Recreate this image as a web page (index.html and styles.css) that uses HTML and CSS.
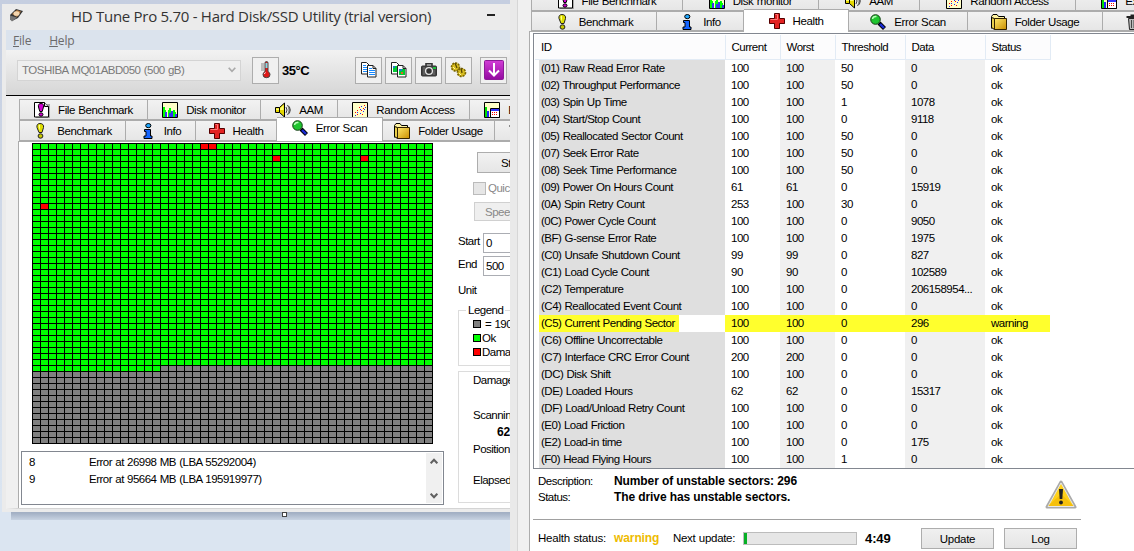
FILE: index.html
```html
<!DOCTYPE html>
<html lang="en">

<head>
    <meta charset="UTF-8">
    <meta name="viewport" content="width=device-width, initial-scale=1.0">
    <title>HD Tune Pro 5.70 - Hard Disk/SSD Utility</title>
    <link rel="stylesheet" href="styles.css">
</head>

<body>
    <!-- Shared icons -->
    <svg class="defs" width="0" height="0">
        <defs>
            <linearGradient id="gold" x1="0" y1="0" x2="1" y2="1">
                <stop offset="0" stop-color="#ffe96b" />
                <stop offset="1" stop-color="#c98d00" />
            </linearGradient>
            <linearGradient id="purple" x1="0" y1="0" x2="0" y2="1">
                <stop offset="0" stop-color="#d23ed6" />
                <stop offset="1" stop-color="#930aa0" />
            </linearGradient>
            <symbol id="file-benchmark" viewBox="0 0 16 16">
                <path d="M2 2h14v14H2z" fill="#aaa" />
                <path d="M.5.5h10l4 4v10.500h-14z" fill="#fff" stroke="#000" />
                <path d="M10.500.500v4h4" fill="#ddd" stroke="#000" />
                <path d="M7 1.500c2.200 0 3 1.500 2.500 3.500L8.200 9.500H5.800L4.500 5C4 3 4.800 1.500 7 1.500z" fill="#d000d0" stroke="#000" />
                <ellipse cx="7" cy="12.500" rx="2" ry="1.700" fill="#d000d0" stroke="#000" />
            </symbol>
            <symbol id="disk-monitor" viewBox="0 0 16 16">
                <path d="M.5.5h15v15H.5z" fill="#ffffc8" stroke="#000" />
                <path d="M1 15V5h2v3h1v7zM6 15V8h1V6h2v9zM11 15V8h2v2h1v5z" fill="#0f0" />
                <path d="M3 10h2v5H3zM7 11h2v4H7zM9 9h2v6H9zM13 12h2v3h-2z" fill="#3434f0" />
            </symbol>
            <symbol id="speaker" viewBox="0 0 16 16">
                <path d="M.5 5.500h4L9.500 1v14L4.500 10.500h-4z" fill="#e6d800" stroke="#000" />
                <path d="M1 6.500h4L8.500 3v5H1z" fill="#ffff70" />
                <path d="M4.500 5.500v5" stroke="#000" />
                <path d="M11 5q2 3 0 6M12.500 3q3.500 5 0 10M14.300 4.500q2 3.500 0 7" fill="none" stroke="#444" />
            </symbol>
            <symbol id="random" viewBox="0 0 16 16">
                <path d="M.5.500h15v15H.5z" fill="#ffffc8" stroke="#000" />
                <path d="M3 10h1v1H3zM5 8h1v1H5zM7 5h1v1H7zM9 8h1v1H9zM11 6h1v1h-1zM12 3h1v1h-1zM10 12h1v1h-1zM5 12h1v1H5z" fill="#f00" />
                <path d="M3 13h1v1H3zM5 10h1v1H5zM8 7h1v1H8zM9 4h1v1H9zM11 9h1v1h-1zM12 7h1v1h-1zM8 11h1v1H8zM13 5h1v1h-1z" fill="#22f" />
            </symbol>
            <symbol id="extra" viewBox="0 0 16 16">
                <path d="M.5.500h15v15H.5z" fill="#ffffc8" stroke="#000" />
                <path d="M1 5h2v10H1z" fill="#0d0" />
                <path d="M3 9h2v6H3z" fill="#22f" />
                <path d="M6.500 6.500h9v9h-9z" fill="#fff" stroke="#000" />
                <path d="M7 7h8v2H7z" fill="#33f" />
                <path d="M8 10h1v1H8zM10 10h1v1h-1zM12 10h1v1h-1zM8 12h1v1H8zM10 12h1v1h-1zM12 12h1v1h-1z" fill="#f00" />
            </symbol>
            <symbol id="benchmark" viewBox="0 0 16 16">
                <path d="M7 .5c2.700 0 4 1.700 3.500 4L9 9.500H6L4 4.500C3.500 2.200 4.500.500 7 .500z" fill="#dede00" stroke="#222" />
                <path d="M5.500 3q.5-1.500 1.500-1.500V8z" fill="#ffff90" />
                <ellipse cx="7.500" cy="13" rx="2.400" ry="2.200" fill="#c8c800" stroke="#222" />
            </symbol>
            <symbol id="info" viewBox="0 0 16 16">
                <ellipse cx="8.300" cy="2.600" rx="2.600" ry="2.100" fill="#20a8ff" stroke="#000" />
                <path d="M4.500 6.500h6v6.500h1.500v2.500h-8V13H6V8.500H4.500z" fill="#1464ff" stroke="#000" />
            </symbol>
            <symbol id="health" viewBox="0 0 16 16">
                <path d="M6 2h5v4h5v5h-5v5H6v-5H1V6h5z" fill="#888" />
                <path d="M5.500.500h5v5h5v5h-5v5h-5v-5h-5v-5h5z" fill="#e32222" stroke="#500" />
                <path d="M6.500 1.500h2v5h-7" fill="none" stroke="#ff7777" />
            </symbol>
            <symbol id="scan" viewBox="0 0 16 16">
                <path d="M9 9l5.500 5.500" stroke="#000" stroke-width="4.200" />
                <path d="M10 10l4 4" stroke="#1a2cd8" stroke-width="2.400" />
                <circle cx="5.500" cy="5.500" r="4.800" fill="#1fc52f" stroke="#143c14" />
                <path d="M2.500 5q.5-3 4-2.500" fill="none" stroke="#b8ffb8" stroke-width="1.500" />
            </symbol>
            <symbol id="folder" viewBox="0 0 16 16">
                <path d="M.5 14.500V2.500l1.500-2h4l1.500 2h6v2" fill="#fff3a0" stroke="#000" />
                <path d="M.5 3.500l3 1v11l-3-2z" fill="#e9cf4b" stroke="#000" />
                <path d="M3.500 4.500h12v11h-12z" fill="url(#gold)" stroke="#332200" />
            </symbol>
            <symbol id="trash" viewBox="0 0 16 16">
                <path d="M.5 3h14M5.500 3V1.500h4V3" fill="none" stroke="#222" stroke-width="2" />
                <path d="M2.500 4.500h11l-1 11h-9z" fill="#bbb" stroke="#222" />
                <path d="M5.500 6v8M8 6v8M10.500 6v8" stroke="#444" />
            </symbol>
        </defs>
    </svg>

    <div class="shadow"></div>

    <div class="window main-window">
        <div class="title-bar">
            <svg class="app-icon" width="15" height="14" viewBox="0 0 15 14">
                <path d="M1 7L7 1l7 2-5 7-6 3z" fill="#333" />
                <path d="M3 6l5-4 4 1.500L8 9z" fill="#b07840" />
                <ellipse cx="7.500" cy="5.500" rx="3" ry="2.300" fill="#f5d7b0" />
                <path d="M1 7.500L8 9.500l-5 4-2-2z" fill="#777" />
            </svg>
            <span class="title">HD Tune Pro 5.70 - Hard Disk/SSD Utility (trial version)</span>
            <span class="minimize"></span>
        </div>
        <div class="menu"><span><u>F</u>ile</span><span><u>H</u>elp</span></div>
        <div class="toolbar">
            <div class="drive">
                <span>TOSHIBA MQ01ABD050 (500 gB)</span>
                <svg width="8" height="6" viewBox="0 0 8 6"><path d="M.7.700L4 4.300 7.300.700" fill="none" stroke="#aaa" stroke-width="1.700" /></svg>
            </div>
            <div class="tool temp">
                <svg width="12" height="18" viewBox="0 0 12 18">
                    <path d="M5 2q0-1.500 1.500-1.500T8 2v8.500q2 1 2 3.200 0 3-3.500 3T3 13.700q0-2.200 2-3.200z" fill="#e01818" stroke="#444" />
                    <path d="M5.500 2h2v5h-2z" fill="#7fdce8" />
                    <path d="M1 3h3M1 5h3M1 7h3M1 9h3" stroke="#888" />
                    <path d="M4.500 13q0-1 1-1.500" stroke="#fff" fill="none" />
                </svg>
            </div>
            <span class="degrees">35°C</span>
            <div class="tool">
                <svg width="18" height="16" viewBox="0 0 18 16">
                    <path d="M1.500.500h5l3 3v8.500h-8z" fill="#fff" stroke="#222" />
                    <path d="M3 3.500h3M3 5.500h5M3 7.500h5M3 9.500h5" stroke="#1689ff" />
                    <path d="M7.500 3.500h5.500l3 3v8.500H7.500z" fill="#fff" stroke="#222" />
                    <path d="M13 3.500v3h3" fill="none" stroke="#222" />
                    <path d="M9 6.500h3M9 8.500h6M9 10.500h6M9 12.500h6" stroke="#1689ff" />
                </svg>
            </div>
            <div class="tool">
                <svg width="18" height="16" viewBox="0 0 18 16">
                    <path d="M1.500.500h5l3 3v8.500h-8z" fill="#fff" stroke="#222" />
                    <path d="M3 4h5v6H3z" fill="#0c3" />
                    <path d="M3 4h2v2H3z" fill="#27c" />
                    <path d="M7.500 3.500h5.500l3 3v8.500H7.500z" fill="#fff" stroke="#222" />
                    <path d="M13 3.500v3h3" fill="none" stroke="#222" />
                    <path d="M9 7h6v6H9z" fill="#0c3" />
                    <path d="M9 7h3v2H9z" fill="#27c" />
                    <path d="M11 10h2v2h-2z" fill="#d62" />
                </svg>
            </div>
            <div class="tool">
                <svg width="16" height="14" viewBox="0 0 16 14">
                    <path d="M5 3V.800h6V3" fill="none" stroke="#333" stroke-width="1.600" />
                    <rect x=".5" y="3" width="15" height="10" rx="1" fill="#454545" stroke="#333" />
                    <circle cx="8" cy="8" r="3.400" fill="#333" stroke="#e8e8e8" stroke-width="1.300" />
                    <path d="M3 4v8M13 7v5" stroke="#777" />
                    <path d="M12 4h3v2h-3z" fill="#1fbf3a" />
                </svg>
            </div>
            <div class="tool">
                <svg width="17" height="16" viewBox="0 0 17 16">
                    <circle cx="5.500" cy="5" r="4" fill="#d8bd20" stroke="#786400" stroke-width="1.600" stroke-dasharray="2 1" />
                    <circle cx="11.500" cy="10.500" r="4" fill="#d8bd20" stroke="#786400" stroke-width="1.600" stroke-dasharray="2 1" />
                    <path d="M5 1l2 5M11 6l1 5" stroke="#5a4a00" stroke-width="1.300" />
                    <path d="M3 5l2 2M9 11l2 2" stroke="#fff2a0" />
                </svg>
            </div>
            <div class="tool download">
                <svg width="20" height="20" viewBox="0 0 20 20">
                    <rect x=".5" y=".5" width="19" height="19" rx="1" fill="url(#purple)" stroke="#8c1a98" />
                    <path d="M10 3v12M5 10.500l5 5 5-5" fill="none" stroke="#fff" stroke-width="2" />
                </svg>
            </div>
        </div>

        <div class="tabs">
            <div class="tab-row">
                <div class="tab w-file"><svg><use href="#file-benchmark" /></svg>File Benchmark</div>
                <div class="tab w-disk"><svg><use href="#disk-monitor" /></svg>Disk monitor</div>
                <div class="tab w-aam"><svg><use href="#speaker" /></svg>AAM</div>
                <div class="tab w-random"><svg><use href="#random" /></svg>Random Access</div>
                <div class="tab w-extra"><svg><use href="#extra" /></svg>Extra tests</div>
            </div>
            <div class="tab-row">
                <div class="tab w-bench"><svg><use href="#benchmark" /></svg>Benchmark</div>
                <div class="tab w-info"><svg><use href="#info" /></svg>Info</div>
                <div class="tab w-health"><svg><use href="#health" /></svg>Health</div>
                <div class="tab active w-scan"><svg><use href="#scan" /></svg>Error Scan</div>
                <div class="tab w-folder"><svg><use href="#folder" /></svg>Folder Usage</div>
                <div class="tab w-erase"><svg><use href="#trash" /></svg></div>
            </div>
        </div>

        <div class="scan-page">
            <div class="scan-left">
                <!-- 50 x 50 blocks, 8 x 6 px each -->
                <svg class="blocks" width="401" height="301" viewBox="0 0 401 301">
                    <defs>
                        <pattern id="lines" width="8" height="6" patternUnits="userSpaceOnUse">
                            <path d="M0 0h8v1H1v5H0z" fill="#000" />
                        </pattern>
                    </defs>
                    <rect width="401" height="301" fill="#808080" />
                    <rect width="401" height="222" fill="#0f0" />
                    <rect y="222" width="128" height="6" fill="#0f0" />
                    <rect x="168" width="16" height="6" fill="#f00" />
                    <rect x="240" y="12" width="8" height="6" fill="#f00" />
                    <rect x="328" y="12" width="8" height="6" fill="#f00" />
                    <rect x="8" y="60" width="8" height="6" fill="#f00" />
                    <rect width="401" height="301" fill="url(#lines)" />
                </svg>
                <div class="log">
                    <div class="log-rows">
                        <div class="log-row"><span>8</span><span>Error at 26998 MB (LBA 55292004)</span></div>
                        <div class="log-row"><span>9</span><span>Error at 95664 MB (LBA 195919977)</span></div>
                    </div>
                    <div class="scrollbar">
                        <svg width="8" height="6" viewBox="0 0 8 6"><path d="M.7 5.300L4 1.700l3.300 3.600" fill="none" stroke="#606060" stroke-width="2" /></svg>
                        <svg width="8" height="6" viewBox="0 0 8 6"><path d="M.7.700L4 4.300 7.300.700" fill="none" stroke="#606060" stroke-width="2" /></svg>
                    </div>
                </div>
            </div>
            <div class="scan-side">
                <div class="side-btn start">Start</div>
                <div class="check"><span class="box"></span>Quick scan</div>
                <div class="side-btn speed">Speed map</div>
                <div class="field"><label>Start</label><span class="input">0</span></div>
                <div class="field"><label>End</label><span class="input">500</span></div>
                <div class="unit">Unit</div>
                <fieldset class="legend">
                    <legend>Legend</legend>
                    <div><i class="grey"></i><span class="size">= 190 MB</span></div>
                    <div><i class="green"></i>Ok</div>
                    <div><i class="red"></i>Damaged</div>
                </fieldset>
                <div class="stats">
                    <div class="damaged">Damaged</div>
                    <div class="scanning">Scanning</div>
                    <b>62 MB/s</b>
                    <div class="position">Position</div>
                    <div class="elapsed">Elapsed</div>
                </div>
            </div>
        </div>
    </div>
    <span class="handle"></span>

    <div class="window health-window">
        <div class="tabs">
            <div class="tab-row">
                <div class="tab w-file"><svg><use href="#file-benchmark" /></svg>File Benchmark</div>
                <div class="tab w-disk"><svg><use href="#disk-monitor" /></svg>Disk monitor</div>
                <div class="tab w-aam"><svg><use href="#speaker" /></svg>AAM</div>
                <div class="tab w-random"><svg><use href="#random" /></svg>Random Access</div>
                <div class="tab w-extra"><svg><use href="#extra" /></svg>Extra tests</div>
            </div>
            <div class="tab-row">
                <div class="tab w-bench"><svg><use href="#benchmark" /></svg>Benchmark</div>
                <div class="tab w-info"><svg><use href="#info" /></svg>Info</div>
                <div class="tab active w-health"><svg><use href="#health" /></svg>Health</div>
                <div class="tab w-scan"><svg><use href="#scan" /></svg>Error Scan</div>
                <div class="tab w-folder"><svg><use href="#folder" /></svg>Folder Usage</div>
                <div class="tab w-erase"><svg><use href="#trash" /></svg></div>
            </div>
        </div>
        <div class="health-page">
            <div class="list">
                <table>
                    <thead>
                        <tr><th class="id">ID</th><th class="current">Current</th><th class="worst">Worst</th><th class="threshold">Threshold</th><th class="data">Data</th><th class="status">Status</th></tr>
                    </thead>
                    <tbody>
                        <tr><td>(01) Raw Read Error Rate</td><td>100</td><td>100</td><td>50</td><td>0</td><td>ok</td></tr>
                        <tr><td>(02) Throughput Performance</td><td>100</td><td>100</td><td>50</td><td>0</td><td>ok</td></tr>
                        <tr><td>(03) Spin Up Time</td><td>100</td><td>100</td><td>1</td><td>1078</td><td>ok</td></tr>
                        <tr><td>(04) Start/Stop Count</td><td>100</td><td>100</td><td>0</td><td>9118</td><td>ok</td></tr>
                        <tr><td>(05) Reallocated Sector Count</td><td>100</td><td>100</td><td>50</td><td>0</td><td>ok</td></tr>
                        <tr><td>(07) Seek Error Rate</td><td>100</td><td>100</td><td>50</td><td>0</td><td>ok</td></tr>
                        <tr><td>(08) Seek Time Performance</td><td>100</td><td>100</td><td>50</td><td>0</td><td>ok</td></tr>
                        <tr><td>(09) Power On Hours Count</td><td>61</td><td>61</td><td>0</td><td>15919</td><td>ok</td></tr>
                        <tr><td>(0A) Spin Retry Count</td><td>253</td><td>100</td><td>30</td><td>0</td><td>ok</td></tr>
                        <tr><td>(0C) Power Cycle Count</td><td>100</td><td>100</td><td>0</td><td>9050</td><td>ok</td></tr>
                        <tr><td>(BF) G-sense Error Rate</td><td>100</td><td>100</td><td>0</td><td>1975</td><td>ok</td></tr>
                        <tr><td>(C0) Unsafe Shutdown Count</td><td>99</td><td>99</td><td>0</td><td>827</td><td>ok</td></tr>
                        <tr><td>(C1) Load Cycle Count</td><td>90</td><td>90</td><td>0</td><td>102589</td><td>ok</td></tr>
                        <tr><td>(C2) Temperature</td><td>100</td><td>100</td><td>0</td><td>206158954...</td><td>ok</td></tr>
                        <tr><td>(C4) Reallocated Event Count</td><td>100</td><td>100</td><td>0</td><td>0</td><td>ok</td></tr>
                        <tr class="warn"><td>(C5) Current Pending Sector</td><td>100</td><td>100</td><td>0</td><td>296</td><td>warning</td></tr>
                        <tr><td>(C6) Offline Uncorrectable</td><td>100</td><td>100</td><td>0</td><td>0</td><td>ok</td></tr>
                        <tr><td>(C7) Interface CRC Error Count</td><td>200</td><td>200</td><td>0</td><td>0</td><td>ok</td></tr>
                        <tr><td>(DC) Disk Shift</td><td>100</td><td>100</td><td>0</td><td>0</td><td>ok</td></tr>
                        <tr><td>(DE) Loaded Hours</td><td>62</td><td>62</td><td>0</td><td>15317</td><td>ok</td></tr>
                        <tr><td>(DF) Load/Unload Retry Count</td><td>100</td><td>100</td><td>0</td><td>0</td><td>ok</td></tr>
                        <tr><td>(E0) Load Friction</td><td>100</td><td>100</td><td>0</td><td>0</td><td>ok</td></tr>
                        <tr><td>(E2) Load-in time</td><td>100</td><td>100</td><td>0</td><td>175</td><td>ok</td></tr>
                        <tr><td>(F0) Head Flying Hours</td><td>100</td><td>100</td><td>1</td><td>0</td><td>ok</td></tr>
                    </tbody>
                </table>
            </div>
            <div class="details">
                <div class="detail-text">
                    <span>Description:</span><b>Number of unstable sectors: 296</b>
                    <span>Status:</span><b>The drive has unstable sectors.</b>
                </div>
                <svg class="alert" width="32" height="29" viewBox="0 0 32 29">
                    <path d="M16 2L30 27H2z" fill="#bbb" stroke="#aaa" stroke-width="3" stroke-linejoin="round" />
                    <path d="M16 3L29 26.500H3z" fill="#ffd21c" stroke="#e8e8e8" stroke-linejoin="round" />
                    <path d="M16 14L29 26H3z" fill="#f0b400" opacity=".6" />
                    <path d="M14 9h4l-.7 10h-2.600z" fill="#222" />
                    <circle cx="16" cy="22.500" r="1.900" fill="#222" />
                </svg>
            </div>
            <div class="footer">
                <span class="label">Health status:</span>
                <b class="warning">warning</b>
                <span class="next">Next update:</span>
                <div class="progress"><div class="bar"></div></div>
                <b class="time">4:49</b>
                <div class="button">Update</div>
                <div class="button">Log</div>
            </div>
        </div>
    </div>
</body>

</html>
```
FILE: styles.css
```css
* {
    box-sizing: border-box;
}

body {
    margin: 0;
    width: 1134px;
    height: 551px;
    overflow: hidden;
    position: relative;
    background: linear-gradient(#c5cee0, #dbe5f1 90%);
    font-family: "Liberation Sans", Arial, sans-serif;
    font-size: 11.5px;
    letter-spacing: -.5px;
    word-spacing: .5px;
    color: #000;
    white-space: nowrap;
}

b {
    font-size: 12px;
    letter-spacing: -.1px;
    word-spacing: 0;
}

.defs {
    position: absolute;
}

.window {
    position: absolute;
    overflow: hidden;
}

.shadow {
    position: absolute;
    left: 11px;
    top: 510px;
    width: 500px;
    height: 10px;
    background: linear-gradient(#a3b0c4 30%, #c8d3e2);
}

.handle {
    position: absolute;
    left: 282px;
    top: 512px;
    width: 5px;
    height: 5px;
    background: #fff;
    border: 1px solid #444;
}

/* Main window */
.main-window {
    left: 2px;
    top: 4px;
    width: 508px;
    height: 508px;
    padding: 0 0 4px 4px;
    background: #ebebeb;
}

.title-bar {
    display: flex;
    height: 26px;
    padding: 4px 15px 0 3px;
}

.title {
    margin: -2px 0 0 47px;
    flex: 1;
    font-family: "Open Sans", sans-serif;
    font-size: 15px;
    line-height: 20px;
    letter-spacing: -.28px;
    word-spacing: 0;
    color: #333;
}

.minimize {
    width: 8px;
    height: 2px;
    margin-top: 6px;
    background: #222;
}

.menu {
    display: flex;
    gap: 18px;
    height: 20px;
    padding-left: 7px;
    background: #dbe3ed;
    font-family: "Open Sans", sans-serif;
    font-size: 12px;
    line-height: 21px;
    letter-spacing: -.2px;
    color: #6a6a6a;
}

.toolbar {
    display: flex;
    align-items: center;
    height: 46px;
    padding: 0 3px 5px 11px;
    background: linear-gradient(#f2f2f2, #d6d6d6);
    border-bottom: 1px solid #000;
}

.drive {
    display: flex;
    align-items: center;
    justify-content: space-between;
    width: 224px;
    height: 21px;
    padding: 0 4px;
    border: 1px solid #d4d4d4;
    background: #efefef;
    color: #7a7a7a;
}

.tool {
    display: flex;
    align-items: center;
    justify-content: center;
    width: 27px;
    height: 27px;
    margin-left: 3px;
    border: 1px solid #adadad;
    background: #f0f0f0;
}

.temp {
    margin-left: 11px;
}

.degrees {
    width: 70px;
    margin-left: 3px;
    font-size: 13px;
    font-weight: bold;
    letter-spacing: -.5px;
}

.download {
    margin-left: 8px;
}

/* Tabs */
.tab-row {
    display: flex;
    height: 21px;
}

.tab {
    flex: none;
    display: flex;
    align-items: center;
    justify-content: center;
    gap: 8px;
    height: 21px;
    border: 1px solid #acacac;
    border-width: 1px 1px 1px 0;
    background: linear-gradient(#f2f2f2, #e6e6e6);
    letter-spacing: -.4px;
}

.tab:first-child {
    border-left-width: 1px;
}

.tab svg {
    flex: none;
    width: 16px;
    height: 16px;
}

.tab.active {
    height: 24px;
    margin-top: -3px;
    border-bottom: 0;
    background: #fff;
    position: relative;
    z-index: 1;
}

.main-window .tab.active {
    padding-bottom: 3px;
}

.main-window .tabs {
    padding: 3px 0 0 13px;
    background: #f0f0f0;
}

.main-window .w-file { width: 129px; }
.main-window .w-disk { width: 113px; }
.main-window .w-aam { width: 77px; }
.main-window .w-random { width: 132px; }
.main-window .w-extra { width: 104px; }
.main-window .w-bench { width: 107px; }
.main-window .w-info { width: 70px; }
.main-window .w-health { width: 81px; }
.main-window .w-scan { width: 106px; }
.main-window .w-folder { width: 112px; }
.main-window .w-erase { width: 44px; }

/* Error scan page */
.scan-page {
    display: flex;
    height: 368px;
    border-left: 12px solid #f0f0f0;
    border-bottom: 1px solid #d4d4d4;
    background: #fff;
    box-shadow: inset 1px 1px #acacac;
}

.scan-left {
    width: 440px;
    padding: 2px 0 0 3px;
}

.blocks {
    display: block;
    margin-left: 11px;
}

.log {
    display: flex;
    width: 423px;
    height: 54px;
    margin-top: 7px;
    border: 1px solid #828790;
}

.log-rows {
    flex: 1;
    padding: 2px 7px;
}

.log-row {
    display: flex;
    line-height: 17px;
}

.log-row span:first-child {
    width: 60px;
}

.scrollbar {
    display: flex;
    flex-direction: column;
    align-items: center;
    justify-content: space-between;
    width: 16px;
    margin: 1px;
    padding: 5px 0 4px;
    background: #f0f0f0;
}

.scan-side {
    flex: 1;
    padding-top: 11px;
    overflow: hidden;
}

.side-btn {
    width: 80px;
    border: 1px solid #adadad;
    background: linear-gradient(#f2f2f2, #e6e6e6);
}

.start {
    height: 21px;
    margin-left: 19px;
    padding-left: 23px;
    line-height: 20px;
}

.check {
    display: flex;
    align-items: center;
    height: 14px;
    margin: 8px 0 7px 15px;
    color: #888;
}

.box {
    flex: none;
    width: 13px;
    height: 13px;
    margin-right: 2px;
    border: 1px solid #bbb;
    background: #e6e6e6;
}

.speed {
    height: 19px;
    margin-left: 16px;
    padding-left: 10px;
    border-color: #d0d0d0;
    background: #efefef;
    line-height: 18px;
    color: #888;
}

.field {
    display: flex;
    height: 20px;
    margin-top: 3px;
    line-height: 17px;
}

.speed + .field {
    margin-top: 12px;
}

.field label {
    flex: none;
    width: 25px;
}

.input {
    flex: none;
    width: 70px;
    height: 20px;
    padding-left: 2px;
    border: 1px solid #abadb3;
    line-height: 18px;
}

.unit {
    margin-top: 6px;
    line-height: 16px;
}

.legend {
    width: 120px;
    height: 63px;
    margin: 5px 0 0;
    padding: 0 0 0 14px;
    border: 1px solid #dcdcdc;
}

.legend legend {
    margin-left: -7px;
    padding: 0 2px;
    line-height: 14px;
}

.legend div {
    display: flex;
    align-items: center;
    height: 14px;
}

.legend i {
    width: 8px;
    height: 8px;
    margin-right: 1px;
    border: 1px solid #000;
}

.size {
    margin-left: 3px;
}

.grey {
    background: #808080;
}

.green {
    background: #0f0;
}

.red {
    background: #f00;
}

.stats {
    width: 120px;
    height: 132px;
    margin-top: 5px;
    padding-left: 14px;
    border: 1px solid #dcdcdc;
    line-height: 17px;
}

.stats b {
    display: block;
    padding-left: 24px;
}

.scanning {
    margin-top: 18px;
}

.elapsed {
    margin-top: 14px;
}

/* Health window */
.health-window {
    left: 510px;
    top: -10px;
    width: 624px;
    height: 561px;
    border-left: 7px solid #e9e9e9;
    background: #f0f0f0;
    box-shadow: inset 1px 0 #d6d6d6;
}

.health-window .tabs {
    padding-left: 14px;
}

.health-window .tab {
    padding-top: 1px;
}

.health-window .tab-row:last-child,
.health-window .tab-row:last-child .tab:not(.active) {
    height: 20px;
}

.health-window .tab.active {
    height: 23px;
    margin-top: -2px;
    padding-bottom: 2px;
}

.health-window .w-file { width: 152px; }
.health-window .w-disk { width: 136px; }
.health-window .w-aam { width: 101px; }
.health-window .w-random { width: 156px; }
.health-window .w-extra { width: 126px; }
.health-window .w-bench { width: 126px; }
.health-window .w-info { width: 87px; }
.health-window .w-health { width: 105px; }
.health-window .w-scan { width: 119px; }
.health-window .w-folder { width: 135px; }
.health-window .w-erase { width: 62px; }

.health-page {
    height: 520px;
    margin-left: 12px;
    padding: 1px 0 0 3px;
    border-left: 1px solid #acacac;
    border-top: 1px solid #acacac;
    background: #fff;
}

.list {
    height: 436px;
    padding: 1px 0 0 1px;
    border: 1px solid #828790;
    border-right: 0;
}

.list table {
    width: 515px;
    table-layout: fixed;
    border-collapse: collapse;
}

.list th {
    height: 24px;
    padding: 0 0 0 6px;
    border-right: 1px solid #e2ebf5;
    border-bottom: 1px solid #e2ebf5;
    background: #fcfcfd;
    font-weight: normal;
    text-align: left;
}

.list .id { width: 190px; }
.list .current { width: 55px; }
.list .worst { width: 55px; }
.list .threshold { width: 70px; }
.list .data { width: 80px; }
.list .status { width: 65px; }

.list td {
    height: 17px;
    padding: 0 0 0 6px;
    line-height: 17px;
}

.list td:first-child {
    background: linear-gradient(to right, #fff 4px, #dfdfdf 4px);
}

.list td:nth-child(3),
.list td:nth-child(5) {
    background: #f0f0f0;
}

.list .warn td:nth-child(n) {
    background: #ffff2d;
}

.list .warn td:first-child {
    background: linear-gradient(to right, #fff 4px, #ffff2d 4px, #ffff2d 144px, #fff 144px);
}

.details {
    display: flex;
    justify-content: space-between;
    width: 548px;
    height: 51px;
    padding: 4px 4px 0 5px;
    border-bottom: 1px solid #a0a0a0;
}

.detail-text {
    display: grid;
    grid-template-columns: 76px auto;
    grid-auto-rows: 16px;
    line-height: 16px;
}

.alert {
    margin-top: 7px;
}

.footer {
    display: flex;
    align-items: center;
    height: 36px;
    padding-left: 5px;
}

.footer .label {
    width: 76px;
    letter-spacing: -.2px;
}

.warning {
    width: 59px;
    color: #eebb00;
}

.next {
    width: 70px;
    letter-spacing: -.3px;
}

.progress {
    width: 114px;
    height: 13px;
    border: 1px solid #bcbcbc;
    background: #e6e6e6;
}

.bar {
    width: 3px;
    height: 11px;
    background: #06b025;
}

.time {
    width: 56px;
    margin-left: 8px;
    font-size: 13px;
}

.button {
    width: 73px;
    height: 21px;
    margin-right: 10px;
    border: 1px solid #adadad;
    background: linear-gradient(#f0f0f0, #e5e5e5);
    line-height: 20px;
    text-align: center;
    letter-spacing: -.3px;
}
```
